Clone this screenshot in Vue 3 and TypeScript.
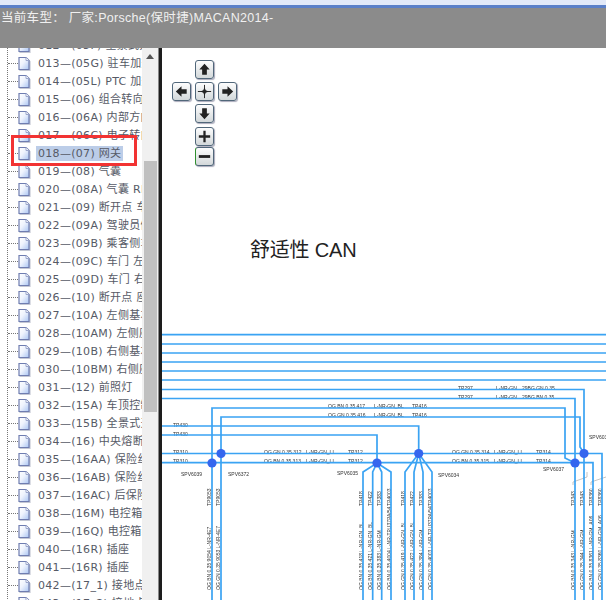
<script setup lang="ts">
const rows = [
  '012—(05F) 全景式天窗',
  '013—(05G) 驻车加热装置',
  '014—(05L) PTC 加热器',
  '015—(06) 组合转向开关',
  '016—(06A) 内部方向灯',
  '017—(06C) 电子转向柱',
  '018—(07) 网关',
  '019—(08) 气囊',
  '020—(08A) 气囊 RDK 系统',
  '021—(09) 断开点 车身控制',
  '022—(09A) 驾驶员侧车门',
  '023—(09B) 乘客侧车门',
  '024—(09C) 车门 左后控制',
  '025—(09D) 车门 右后控制',
  '026—(10) 断开点 座椅',
  '027—(10A) 左侧基本座椅',
  '028—(10AM) 左侧座椅记忆',
  '029—(10B) 右侧基本座椅',
  '030—(10BM) 右侧座椅记忆',
  '031—(12) 前照灯',
  '032—(15A) 车顶控制单元',
  '033—(15B) 全景式天窗',
  '034—(16) 中央熔断丝盒',
  '035—(16AA) 保险丝盒 A',
  '036—(16AB) 保险丝盒 B',
  '037—(16AC) 后保险丝盒',
  '038—(16M) 电控箱开关',
  '039—(16Q) 电控箱继电',
  '040—(16R) 插座',
  '041—(16R) 插座',
  '042—(17_1) 接地点分布',
  '043—(17_2) 接地点分布',
]

// wires of the CAN diagram, in page coordinates minus the canvas offset (162, 0)
const ox = 162
function w(points: number[][]): string {
  return points.map((p) => `${p[0] - ox},${p[1]}`).join(' ')
}

const wires: string[] = [
  ...[334.7, 344, 353, 362, 371, 380].map((y) => w([[ox, y], [606, y]])),
  w([[ox, 389.5], [584, 389.5], [584, 600]]),
  w([[ox, 398.5], [575, 398.5], [575, 600]]),
  w([[212, 600], [212, 408], [565, 408], [565, 458], [575, 463]]),
  w([[221, 600], [221, 417], [580, 417], [580, 447], [584, 453]]),
  w([[ox, 426], [418.7, 426], [418.7, 453.5]]),
  w([[ox, 435], [377, 435], [377, 463]]),
  w([[ox, 453.5], [602, 453.5], [602, 600]]),
  w([[ox, 462.7], [593, 462.7], [593, 600]]),
  w([[377, 463], [363, 472], [363, 600]]),
  w([[377, 463], [372.7, 472], [372.7, 600]]),
  w([[377, 463], [381.7, 472], [381.7, 600]]),
  w([[377, 463], [391, 472], [391, 600]]),
  w([[418.7, 453.5], [405, 472], [405, 600]]),
  w([[418.7, 453.5], [414, 472], [414, 600]]),
  w([[418.7, 453.5], [423, 472], [423, 600]]),
  w([[418.7, 453.5], [432, 472], [432, 600]]),
]

const nodes = [
  [212, 463],
  [221, 453.5],
  [377, 463],
  [418.7, 453.5],
  [575, 463],
  [584, 453.5],
].map((n) => ({ x: n[0] - ox, y: n[1] }))

const labels: Array<[number, number, string]> = [
  [173, 427, 'TP430'], [173, 436, 'TP430'],
  [173, 454, 'TP310'], [173, 463, 'TP310'],
  [264, 454, 'OG GN 0.35 312'], [306, 454, 'L-NR-GN_LL'], [348, 454, 'TP312'],
  [264, 463, 'OG BN 0.35 313'], [306, 463, 'L-NR-GN_LL'], [348, 463, 'TP312'],
  [328, 408, 'OG BN 0.35 417'], [374, 408, 'L-NR-GN_BL'], [412, 408, 'TP416'],
  [328, 417, 'OG GN 0.35 416'], [374, 417, 'L-NR-GN_BL'], [412, 417, 'TP416'],
  [458, 390, 'TP297'], [496, 390, 'L-NR-GN'], [522, 390, '29BG GN 0.35'],
  [458, 399, 'TP297'], [496, 399, 'L-NR-GN'], [522, 399, '29BG BN 0.35'],
  [452, 454, 'OG GN 0.35 314'], [494, 454, 'L-NR-GN_LL'], [536, 454, 'TP314'],
  [452, 463, 'OG BN 0.35 315'], [494, 463, 'L-NR-GN_LL'], [536, 463, 'TP314'],
  [181, 476, 'SPV6039'], [228, 476, 'SPV6372'], [337, 475, 'SPV6035'],
  [438, 477, 'SPV6034'], [543, 471, 'SPV6037'], [589, 439, 'SPV6039'],
]

const vlabels: Array<[number, number, string]> = [
  [211, 506, 'TP9053'], [211, 590, 'OG BN 0.35 9054  L-NR-4E7'],
  [220, 506, 'TP9053'], [220, 590, 'OG GN 0.35 9053  L-NR-4E7'],
  [363, 506, 'TP418'], [363, 590, 'OG BN 0.35 418  L-NR-GN_BL'],
  [372, 506, 'TP422'], [372, 590, 'OG BN 0.35 421  L-NR-GN_BL'],
  [381, 506, 'TP383'], [381, 590, 'OG BN 0.35 383  L-NR-GM'],
  [391, 506, 'TP4003'], [391, 590, 'OG BN 0.35 4004  L-NR-TPU37PA/54'],
  [405, 506, 'TP418'], [405, 590, 'OG GN 0.35 419  L-NR-GN_BL'],
  [414, 506, 'TP422'], [414, 590, 'OG GN 0.35 422  L-NR-GN_BL'],
  [423, 506, 'TP383'], [423, 590, 'OG GN 0.35 384  L-NR-GM'],
  [432, 506, 'TP4003'], [432, 590, 'OG GN 0.35 4003  L-NR-TPU37PA/54'],
  [575, 506, 'TP343'], [575, 590, 'OG BN 0.35 343  L-NR-GM'],
  [584, 506, 'TP343'], [584, 590, 'OG GN 0.35 344  L-NR-GM'],
  [593, 506, 'TP8360'], [593, 590, 'OG BN 0.35 8361  L-NR-GM_A06'],
  [602, 506, 'TP8360'], [602, 590, 'OG GN 0.35 8360  L-NR-GM_A06'],
]
</script>

<template>
  <div class="page">
    <div class="titlebar"></div>
    <header class="carbar">当前车型： 厂家:Porsche(保时捷)MACAN2014-</header>

    <div class="body">
      <aside class="side">
        <ul class="tree">
          <li v-for="r in rows" :key="r" class="row">
            <span class="dash"></span>
            <svg class="doc" width="12" height="13" viewBox="0 0 12 13">
              <defs>
                <linearGradient id="docfill" x1="0" y1="0" x2="1" y2="1">
                  <stop offset="0" stop-color="#ffffff" />
                  <stop offset="0.45" stop-color="#eef3fd" />
                  <stop offset="1" stop-color="#a9c4f2" />
                </linearGradient>
              </defs>
              <path d="M1 .5H8L11 3.500V12.500H1Z" fill="url(#docfill)" stroke="#6f7db0" stroke-width="1.2" />
              <path d="M8 .5V3.500H11" fill="#fff" stroke="#9aa6cc" />
            </svg>
            <span class="name" :class="{ sel: r.startsWith('018') }">{{ r }}</span>
          </li>
        </ul>
        <div class="scroll">
          <span class="up"></span>
          <span class="thumb"></span>
        </div>
      </aside>

      <main class="canvas">
        <div class="heading">舒适性 CAN</div>
        <svg class="wiring" width="444" height="552" viewBox="0 48 444 552">
          <g class="txt">
            <text v-for="(l, i) in labels" :key="i" :x="l[0] - ox" :y="l[1]">{{ l[2] }}</text>
            <text
              v-for="(l, i) in vlabels"
              :key="'v' + i"
              :transform="`translate(${l[0] - ox} ${l[1]}) rotate(-90)`"
            >{{ l[2] }}</text>
          </g>
          <polyline points="411,485 411,482 425,477 425,472" class="thin" />
          <polyline points="429,485 429,482 444,477" class="thin" />
          <polyline v-for="(p, i) in wires" :key="i" :points="p" class="wire" />
          <circle v-for="(n, i) in nodes" :key="'n' + i" :cx="n.x" :cy="n.y" r="4.6" fill="#3566ee" />
        </svg>

        <div class="pad">
          <button class="btn up-b">
            <svg viewBox="0 0 18 18"><path d="M9 3 14.500 9H11.500V14.500H6.500V9H3.500Z" /></svg>
          </button>
          <button class="btn left-b">
            <svg viewBox="0 0 18 18"><path d="M3 9 9 3.500V6.500H14.500V11.500H9V14.500Z" /></svg>
          </button>
          <button class="btn mid-b">
            <svg viewBox="0 0 18 18"><path d="M9 4.500 10.300 7.700 13.500 9 10.300 10.300 9 13.500 7.700 10.300 4.500 9 7.700 7.700Z" /><path d="M9 2V16M2 9H16" stroke="#222" stroke-width="1" /></svg>
          </button>
          <button class="btn right-b">
            <svg viewBox="0 0 18 18"><path d="M15 9 9 3.500V6.500H3.500V11.500H9V14.500Z" /></svg>
          </button>
          <button class="btn down-b">
            <svg viewBox="0 0 18 18"><path d="M9 15 14.500 9H11.500V3.500H6.500V9H3.500Z" /></svg>
          </button>
          <button class="btn plus-b">
            <svg viewBox="0 0 18 18"><path d="M7.800 3H10.200V7.800H15V10.200H10.200V15H7.800V10.200H3V7.800H7.800Z" /></svg>
          </button>
          <button class="btn minus-b">
            <svg viewBox="0 0 18 18"><path d="M3 7.500H15V10.500H3Z" /></svg>
          </button>
        </div>
      </main>
    </div>

    <div class="mark"></div>
  </div>
</template>

<style>
html,
body {
  margin: 0;
  overflow: hidden;
  background: #fff;
}
</style>

<style scoped>
.page {
  position: relative;
  width: 606px;
  height: 600px;
  overflow: hidden;
  display: flex;
  flex-direction: column;
}

.titlebar {
  height: 5px;
  background: #e2e9f8;
  border-bottom: 3px solid #5b80c8;
  flex: none;
}

.carbar {
  position: relative;
  z-index: 1;
  height: 40px;
  flex: none;
  box-sizing: border-box;
  padding: 1px 0 0 1px;
  background: #8b8b8b;
  color: #f0f0f0;
  font: 12.5px/18px "Liberation Sans", "Noto Sans CJK SC", sans-serif;
  letter-spacing: 0.3px;
  white-space: nowrap;
}

.body {
  flex: 1;
  display: flex;
  min-height: 0;
}

.side {
  width: 159px;
  flex: none;
  display: flex;
  background: #fff;
}

.tree {
  width: 142px;
  flex: none;
  margin: -12px 0 0;
  padding: 0;
  list-style: none;
  overflow: hidden;
  background-image: linear-gradient(#777 50%, transparent 50%);
  background-size: 1px 2px;
  background-position: 7px 0;
  background-repeat: repeat-y;
}

.row {
  display: flex;
  align-items: center;
  height: 18px;
  white-space: nowrap;
}

.dash {
  width: 10px;
  margin-left: 8px;
  flex: none;
  border-top: 1px dotted #777;
}

.doc {
  flex: none;
  filter: drop-shadow(1px 1px 0 #c4c8d4);
}

.name {
  margin-left: 6px;
  padding: 0 2px;
  height: 15px;
  color: #565a66;
  font: 11px/15px "DejaVu Sans", "Noto Sans CJK SC", sans-serif;
  letter-spacing: 0.3px;
}

.name.sel {
  background: #bccde8;
}

.scroll {
  position: relative;
  width: 17px;
  flex: none;
  background: #f0f0f0;
}

.up {
  position: absolute;
  top: 6px;
  left: 4px;
  border: 4px solid transparent;
  border-top: 0;
  border-bottom: 5px solid #555;
}

.thumb {
  position: absolute;
  top: 113px;
  left: 2px;
  width: 13px;
  height: 251px;
  background: #c0c0c0;
}

.canvas {
  position: relative;
  flex: 1;
  background: #fff;
  border-left: 3px solid #1d1d1d;
  box-shadow: -1px 0 0 #888;
  min-width: 0;
}

.heading {
  position: absolute;
  left: 88px;
  top: 188px;
  color: #222;
  font: 20px/28px "Liberation Sans", "Noto Sans CJK SC", sans-serif;
  letter-spacing: -0.2px;
  white-space: nowrap;
}

.wiring {
  position: absolute;
  left: 0;
  top: 0;
  display: block;
}

.wire {
  fill: none;
  stroke: #3aa3f3;
  stroke-width: 1.7;
}

.thin {
  fill: none;
  stroke: #b5b5b5;
  stroke-width: 0.8;
}

.txt {
  filter: blur(0.25px);
}

.txt text {
  font: 5px "Liberation Sans", sans-serif;
  fill: #333;
}

.pad {
  position: absolute;
  left: 10px;
  top: 12px;
  display: grid;
  grid-template-columns: 19px 19px 19px;
  grid-auto-rows: 19px;
  column-gap: 4px;
  row-gap: 3px;
}

.btn {
  width: 19px;
  height: 19px;
  padding: 0;
  box-sizing: border-box;
  border: 1px solid #51677a;
  border-radius: 3px;
  background: linear-gradient(#fdfdfd, #d3d8da);
  box-shadow: 1px 1px 1px #aab;
  display: block;
}

.btn svg {
  display: block;
  width: 17px;
  height: 17px;
  fill: #222;
}

.up-b { grid-column: 2; grid-row: 1; }
.left-b { grid-column: 1; grid-row: 2; }
.mid-b { grid-column: 2; grid-row: 2; }
.right-b { grid-column: 3; grid-row: 2; }
.down-b { grid-column: 2; grid-row: 3; }
.plus-b { grid-column: 2; grid-row: 4; margin-top: 1px; }
.minus-b { grid-column: 2; grid-row: 5; border-left-color: #2f8f2f; margin-top: -1px; }

.mark {
  position: absolute;
  left: 11px;
  top: 135px;
  width: 126px;
  height: 31px;
  box-sizing: border-box;
  border: 3px solid #f23333;
}
</style>
